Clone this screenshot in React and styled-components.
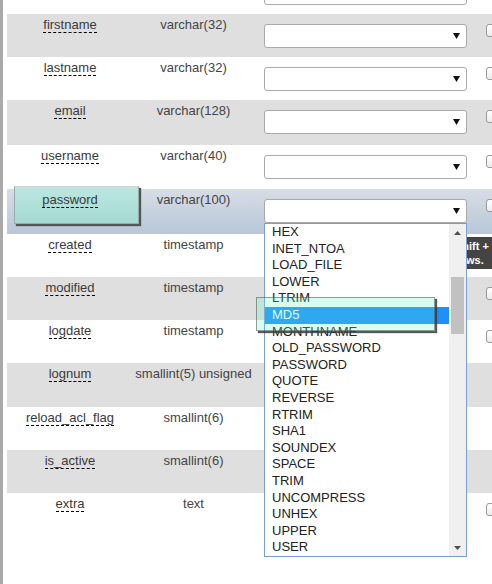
import styled, { createGlobalStyle } from "styled-components";

//global reset
const GlobalStyle = createGlobalStyle`
  html, body {
    margin: 0;
    padding: 0;
    background: #fff;
  }
  body {
    font-family: "Liberation Sans", Arial, sans-serif;
  }
`;

//styles
const Page = styled.div`
  position: relative;
  width: 492px;
  height: 584px;
  overflow: hidden;
  display: flex;
`;

const SideBar = styled.div`
  flex: none;
  width: 3px;
  background: #a9a9a9;
`;

const Table = styled.div`
  flex: 1;
  min-width: 0;
  margin: -29px 0 0 4px;
`;

const Row = styled.div`
  display: grid;
  grid-template-columns: 126px 121px 213px 32px;
  height: ${({ $h }) => $h}px;
  background: ${({ $active, $alt }) =>
    $active
      ? "linear-gradient(#d7dde5, #b8c7d8)"
      : $alt
      ? "#dfdfdf"
      : "#fff"};
`;

const TextCell = styled.div`
  position: relative;
  padding-top: 3px;
  text-align: center;
  font-size: 13px;
  line-height: 15px;
  color: #444;
  white-space: nowrap;
`;

const FieldName = styled.span`
  position: relative;
  z-index: 1;
  display: inline-block;
  color: #3a3a3a;
  border-bottom: 1px dashed #000;
`;

const DragHelper = styled.div`
  position: absolute;
  left: 7px;
  top: -3px;
  width: 125px;
  height: 38px;
  box-sizing: border-box;
  border: 1px solid #9aa;
  border-top-color: #cfd6d6;
  background: linear-gradient(#bce7e1, #a5d9d2);
  box-shadow: 2px 2px 1px #555;
`;

const SelectCell = styled.div`
  position: relative;
  padding: 10px 0 0 10px;
`;

const SelectBox = styled.div`
  width: 203px;
  height: 24px;
  box-sizing: border-box;
  border: 1px solid #a9a9a9;
  border-radius: 3px;
  background: #fff;
  display: flex;
  align-items: center;
  justify-content: flex-end;
  padding-right: 6px;
`;

const CheckCell = styled.div`
  padding: 10px 0 0 19px;
`;

const CheckBox = styled.div`
  width: 13px;
  height: 13px;
  box-sizing: border-box;
  border: 1px solid #999;
  border-radius: 3px;
  background: linear-gradient(#fff, #ececec);
`;

const DropList = styled.div`
  position: absolute;
  z-index: 5;
  left: 10px;
  top: 34px;
  width: 203px;
  height: 334px;
  box-sizing: border-box;
  border: 1px solid #7a9dd6;
  background: #fff;
  display: flex;
`;

const Options = styled.div`
  flex: 1;
  overflow: hidden;
`;

const Option = styled.div`
  height: 16.6px;
  line-height: 16.6px;
  padding-left: 7px;
  font-size: 13px;
  color: ${({ $selected }) => ($selected ? "#fff" : "#222")};
  background: ${({ $selected }) => ($selected ? "#1e8fff" : "transparent")};
  white-space: nowrap;
`;

const ScrollBar = styled.div`
  flex: none;
  width: 17px;
  background: #f0f0f0;
  display: flex;
  flex-direction: column;
`;

const ScrollButton = styled.div`
  flex: none;
  height: 17px;
  display: flex;
  align-items: center;
  justify-content: center;
`;

const ScrollTrack = styled.div`
  flex: 1;
`;

const ScrollThumb = styled.div`
  margin: 36px 2px 0;
  height: 57px;
  background: #c1c1c1;
`;

const Tooltip = styled.div`
  position: absolute;
  z-index: 4;
  left: 449px;
  top: 237px;
  padding: 2px 6px 2px;
  background: #444;
  color: #fff;
  font-size: 11px;
  font-weight: bold;
  line-height: 14px;
  white-space: nowrap;
`;

const DragGhost = styled.div`
  position: absolute;
  z-index: 6;
  left: 256px;
  top: 297px;
  width: 179px;
  height: 34px;
  box-sizing: border-box;
  border: 1px solid rgba(80, 80, 80, 0.55);
  background: rgba(100, 244, 196, 0.25);
  box-shadow: 2px 2px 1px rgba(60, 60, 60, 0.85);
`;

//icons
const SelectArrow = () => (
  <svg width="7" height="6" viewBox="0 0 7 6">
    <polygon points="0,0 7,0 3.5,6" fill="#111" />
  </svg>
);

const ScrollArrow = ({ up }) => (
  <svg width="7" height="4" viewBox="0 0 7 4">
    <polygon points={up ? "0,4 7,4 3.5,0" : "0,0 7,0 3.5,4"} fill="#505050" />
  </svg>
);

//data (first row is scrolled out of view, only its select shows)
const fields = [
  { name: "", type: "", h: 43, check: true },
  { name: "firstname", type: "varchar(32)", h: 43, check: true },
  { name: "lastname", type: "varchar(32)", h: 43, check: true },
  { name: "email", type: "varchar(128)", h: 45, check: true },
  { name: "username", type: "varchar(40)", h: 44, check: true },
  { name: "password", type: "varchar(100)", h: 45, check: true, open: true },
  { name: "created", type: "timestamp", h: 43, check: true },
  { name: "modified", type: "timestamp", h: 43, check: true },
  { name: "logdate", type: "timestamp", h: 43, check: true },
  { name: "lognum", type: "smallint(5) unsigned", h: 44, check: false },
  { name: "reload_acl_flag", type: "smallint(6)", h: 43, check: false },
  { name: "is_active", type: "smallint(6)", h: 43, check: false },
  { name: "extra", type: "text", h: 43, check: true },
];

const functions = [
  "HEX",
  "INET_NTOA",
  "LOAD_FILE",
  "LOWER",
  "LTRIM",
  "MD5",
  "MONTHNAME",
  "OLD_PASSWORD",
  "PASSWORD",
  "QUOTE",
  "REVERSE",
  "RTRIM",
  "SHA1",
  "SOUNDEX",
  "SPACE",
  "TRIM",
  "UNCOMPRESS",
  "UNHEX",
  "UPPER",
  "USER",
];

//component
export default function App() {
  return (
    <>
      <GlobalStyle />
      <Page>
        <SideBar />
        <Table>
          {fields.map((field, i) => (
            <Row key={i} $h={field.h} $alt={i % 2 === 1} $active={field.open}>
              <TextCell>
                {field.open && <DragHelper />}
                {field.name && <FieldName>{field.name}</FieldName>}
              </TextCell>
              <TextCell>{field.type}</TextCell>
              <SelectCell>
                <SelectBox>
                  <SelectArrow />
                </SelectBox>
                {field.open && (
                  <DropList>
                    <Options>
                      {functions.map((fn) => (
                        <Option key={fn} $selected={fn === "MD5"}>
                          {fn}
                        </Option>
                      ))}
                    </Options>
                    <ScrollBar>
                      <ScrollButton>
                        <ScrollArrow up />
                      </ScrollButton>
                      <ScrollTrack>
                        <ScrollThumb />
                      </ScrollTrack>
                      <ScrollButton>
                        <ScrollArrow />
                      </ScrollButton>
                    </ScrollBar>
                  </DropList>
                )}
              </SelectCell>
              <CheckCell>{field.check && <CheckBox />}</CheckCell>
            </Row>
          ))}
        </Table>
        <Tooltip>
          Shift +
          <br />
          rows.
        </Tooltip>
        <DragGhost />
      </Page>
    </>
  );
}
